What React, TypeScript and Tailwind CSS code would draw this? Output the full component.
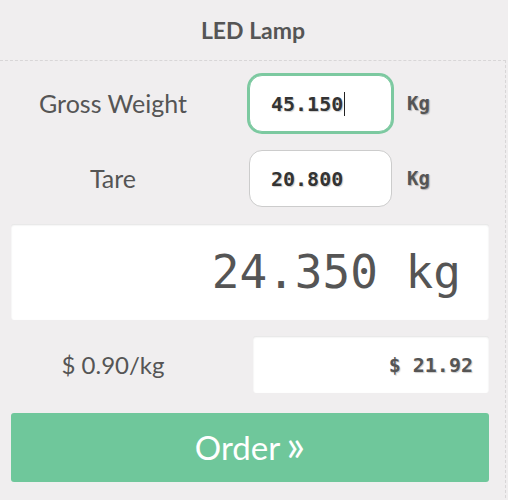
const labelFont = { fontFamily: '"Lato", "Noto Sans", sans-serif' };
const monoFont = { fontFamily: '"DejaVu Sans Mono", "Liberation Mono", monospace' };

const WeightRow = ({ label, value, focused }: { label: string; value: string; focused?: boolean }) => (
  <div className="flex h-[57px] items-center">
    <div className="w-[226px] text-center text-[25px] leading-none text-[#555]" style={labelFont}>
      {label}
    </div>
    <div
      className={
        focused
          ? "ml-[23px] flex h-[57px] w-[143px] items-center rounded-[13px] border border-[#7cc9a0] bg-white pl-[21px] shadow-[0_0_0_2px_#7cc9a0]"
          : "ml-[23px] flex h-[57px] w-[143px] items-center rounded-[13px] border border-[#cccccc] bg-white pl-[21px]"
      }
    >
      <span
        className="text-[20px] font-bold text-[#333] [text-shadow:1px_1px_1px_rgba(0,0,0,0.2)]"
        style={monoFont}
      >
        {value}
      </span>
      {focused && <span className="ml-px h-[24px] w-px bg-[#222]"></span>}
    </div>
    <div
      className="ml-[15px] text-[19px] font-bold text-[#555] [text-shadow:1px_1px_1px_rgba(0,0,0,0.25)]"
      style={monoFont}
    >
      Kg
    </div>
  </div>
);

export default function App() {
  return (
    <div className="min-h-screen w-full bg-[#f0eeef]">
      {/* Header */}
      <div className="flex h-[60px] w-[506px] items-center justify-center">
        <h1 className="text-[23px] font-bold text-[#555]" style={labelFont}>
          LED Lamp
        </h1>
      </div>

      <div className="w-[506px] border-t border-r border-dashed border-[#d8d6d7] pb-[16px] pt-[14px]">
        <div className="flex flex-col gap-[18px]">
          <WeightRow label="Gross Weight" value="45.150" focused />
          <WeightRow label="Tare" value="20.800" />
        </div>

        {/* Net weight display */}
        <div className="ml-[11px] mt-[17px] flex h-[96px] w-[478px] items-center justify-end rounded-[3px] bg-white pr-[28px] shadow-[inset_0_1px_2px_rgba(0,0,0,0.12)]">
          <span className="text-[46px] leading-none text-[#555]" style={monoFont}>
            24.350 kg
          </span>
        </div>

        {/* Price */}
        <div className="mt-[16px] flex h-[57px] items-center">
          <div className="w-[226px] text-center text-[24px] leading-none text-[#555]" style={labelFont}>
            $ 0.90/kg
          </div>
          <div className="ml-[27px] flex h-[57px] w-[236px] items-center justify-end rounded-[3px] bg-white pr-[16px] shadow-[inset_0_1px_2px_rgba(0,0,0,0.12)]">
            <span
              className="text-[20px] font-bold text-[#555] [text-shadow:1px_1px_1px_rgba(0,0,0,0.2)]"
              style={monoFont}
            >
              $ 21.92
            </span>
          </div>
        </div>

        {/* Order */}
        <button
          className="ml-[11px] mt-[20px] flex h-[69px] w-[478px] items-center justify-center rounded-[3px] bg-[#6fc79b] text-[33px] text-white"
          style={labelFont}
        >
          Order <span className="ml-[6px] -translate-y-[4px] text-[44px] leading-none">»</span>
        </button>
      </div>
    </div>
  );
}
